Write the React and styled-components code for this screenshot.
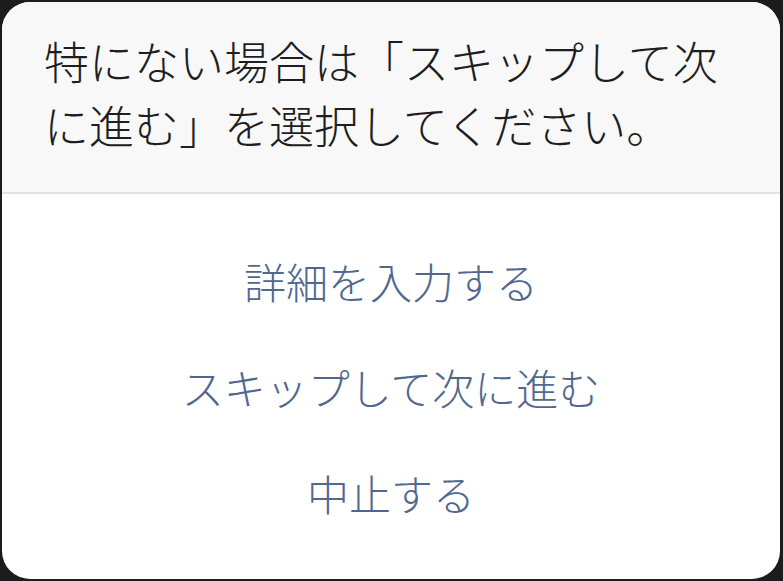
import React from 'react'
import styled, {createGlobalStyle} from 'styled-components'

const GlobalStyle = createGlobalStyle`
  html, body {
    margin: 0;
    padding: 0;
    background: #1c1c1e;
  }
  body {
    font-family: "Noto Sans CJK JP", "Noto Sans", sans-serif;
  }
`

const Sheet = styled.div`
  box-sizing: border-box;
  margin: 2px 3px 0 2px;
  width: 778px;
  height: 577px;
  background: #ffffff;
  border-radius: 28px;
  overflow: hidden;
  display: flex;
  flex-direction: column;
`

const Header = styled.div`
  box-sizing: border-box;
  height: 192px;
  padding: 27px 46px 0 42px;
  background: #f8f8f8;
  border-bottom: 2px solid #e2e2e2;
`

const Message = styled.p`
  margin: 0;
  font-size: 45px;
  font-weight: 300;
  line-height: 64px;
  color: #1e1e22;
`

const Options = styled.div`
  display: flex;
  flex-direction: column;
  padding-top: 34px;
`

const Option = styled.button`
  appearance: none;
  border: none;
  background: transparent;
  height: 106px;
  padding: 0;
  font-family: inherit;
  font-size: 42px;
  font-weight: 300;
  line-height: 106px;
  color: #50688f;
  text-align: center;
  cursor: pointer;
`

const options = ['詳細を入力する', 'スキップして次に進む', '中止する']

export default function App() {
  return (
    <>
      <GlobalStyle />
      <Sheet>
        <Header>
          <Message>特にない場合は「スキップして次に進む」を選択してください。</Message>
        </Header>
        <Options>
          {options.map(label => (
            <Option key={label}>{label}</Option>
          ))}
        </Options>
      </Sheet>
    </>
  )
}
